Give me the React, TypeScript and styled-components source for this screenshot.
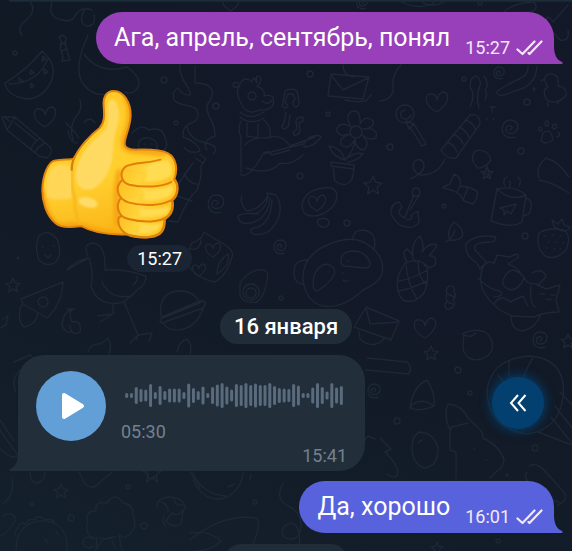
import React from "react";
import styled, { createGlobalStyle } from "styled-components";

const GlobalStyle = createGlobalStyle`
  *, *::before, *::after { box-sizing: border-box; }
  body { margin: 0; background: #121a26; }
`;

const Screen = styled.main`
  position: relative;
  isolation: isolate;
  display: flex;
  flex-direction: column;
  height: 100vh;
  overflow: hidden;
  padding: 0 18px;
  font-family: Roboto, "Noto Sans", sans-serif;
  color: #fff;
  background:
    radial-gradient(ellipse at 70% 25%, rgba(20, 24, 42, 0.9), rgba(20, 24, 42, 0) 60%),
    linear-gradient(200deg, #121927 0%, #111925 45%, #14202c 100%);

  & > * { flex-shrink: 0; }
`;

const Wallpaper = styled.svg`
  position: absolute;
  top: 0;
  left: 0;
  z-index: -1;
  fill: none;
  stroke: #1d2735;
  stroke-width: 1.4;
  stroke-linecap: round;
  stroke-linejoin: round;
`;

const TopEdge = styled.div`
  height: 2px;
  margin: 0 -18px 10px -9px;
  background: linear-gradient(#1d303d, #16232f);
`;

const OutBubble = styled.article<{ $color: string }>`
  position: relative;
  align-self: flex-end;
  display: flex;
  align-items: flex-end;
  gap: 15px;
  height: 52px;
  padding: 0 11px 0 18px;
  border-radius: 26px 26px 0 26px;
  background: ${(p) => p.$color};
`;

const Tail = styled.svg<{ $side: "left" | "right"; $color: string }>`
  position: absolute;
  bottom: 0;
  ${(p) => (p.$side === "right" ? "left: 100%;" : "right: 100%; transform: scaleX(-1);")}
  fill: ${(p) => p.$color};
`;

const MessageText = styled.p`
  margin: 0;
  font-size: 25px;
  line-height: 52px;
`;

const Meta = styled.span`
  display: flex;
  align-items: center;
  gap: 6px;
  padding-bottom: 4px;
  font-size: 18px;
  line-height: 24px;
  color: #f3e8fa;
`;

const StickerMessage = styled.article`
  display: flex;
  flex-direction: column;
  align-items: flex-end;
  align-self: flex-start;
  gap: 6px;
  margin: 26px 0 37px 23px;
`;

const Sticker = styled.svg`
  display: block;
  margin-right: 13px;
`;

const StickerTime = styled.time`
  padding: 0 10px;
  border-radius: 14px;
  background: #1b2432;
  font-size: 18px;
  line-height: 27px;
`;

const DateChip = styled.div`
  align-self: center;
  min-width: 124px;
  height: 35px;
  padding: 0 14px;
  border-radius: 18px;
  background: #202d39;
  font-size: 22px;
  font-weight: 500;
  line-height: 35px;
`;

const UpcomingDateChip = styled(DateChip)`
  margin-top: 11px;
`;

const VoiceRow = styled.div`
  display: flex;
  justify-content: space-between;
  align-items: flex-start;
  margin: 11px 0 10px;
`;

const VoiceBubble = styled.article`
  position: relative;
  display: grid;
  grid-template-columns: 70px auto;
  column-gap: 15px;
  padding: 16px 18px 3px;
  border-radius: 26px 26px 26px 0;
  background: #222e3a;
  color: #74818d;
  font-size: 18px;
  line-height: 24px;
`;

const PlayButton = styled.button`
  display: grid;
  place-items: center;
  width: 70px;
  height: 70px;
  padding: 0 0 0 3px;
  border: 0;
  border-radius: 50%;
  background: #619fd6;
  cursor: pointer;
`;

const Track = styled.div`
  display: flex;
  flex-direction: column;
  gap: 11px;
  padding-top: 11px;
`;

const Waveform = styled.svg`
  display: block;
  margin: 0 4px;
  stroke: #596b7c;
  stroke-width: 3;
  stroke-linecap: round;
`;

const SentTime = styled.time`
  grid-column: 1 / -1;
  justify-self: end;
`;

const BackButton = styled.button`
  display: grid;
  place-items: center;
  width: 52px;
  height: 52px;
  margin: 22px 10px 0 0;
  padding: 0;
  border: 0;
  border-radius: 50%;
  background: #03406f;
  box-shadow: 0 0 10px 3px rgba(3, 64, 111, 0.75);
  cursor: pointer;
`;

const BAR_HEIGHTS = [
  4, 4, 16, 12, 11, 22, 6, 18, 8, 13, 13, 13, 6, 23, 14, 8, 17, 4, 16, 21, 24, 17, 11,
  22, 20, 24, 20, 23, 20, 20, 24, 18, 14, 13, 12, 22, 19, 4, 4, 15, 24, 16, 7, 24, 15, 18,
];

const STARS = [[373, 185, 9], [487, 173, 6], [61, 491, 7], [431, 353, 7], [13, 285, 7], [152, 473, 9], [568, 341, 7], [437, 548, 6]];
const HEARTS = [[437, 102, 10], [45, 117, 10], [425, 328, 10], [317, 203, 8], [213, 250, 7], [231, 3, 8], [199, 270, 6]];
const SPIRALS = [[216, 204, 9], [280, 247, 7], [510, 129, 9], [499, 73, 6], [540, 340, 8], [374, 391, 7], [362, 3, 6]];
const DOTS = [
  [15, 53, 2], [164, 80, 3], [216, 106, 3], [176, 123, 2], [310, 74, 3], [328, 114, 2], [464, 79, 2], [527, 102, 3],
  [534, 89, 1], [390, 147, 3], [300, 176, 3], [521, 151, 3], [347, 223, 3], [444, 206, 2], [525, 236, 3], [18, 258, 1],
  [281, 298, 2], [128, 487, 2], [32, 504, 2], [71, 518, 3], [144, 526, 3], [255, 502, 2], [458, 370, 3], [470, 393, 2],
  [397, 421, 3], [535, 448, 3], [507, 475, 1], [480, 3, 2], [498, 541, 2],
];

const heartPath = (s: number) =>
  `M0 ${s} C${-s * 1.5} ${s * 0.2} ${-s * 1.2} ${-s} ${-s * 0.5} ${-s * 0.8} Q0 ${-s * 0.7} 0 ${-s * 0.2} Q${s * 0.2} ${-s} ${s * 0.7} ${-s} C${s * 1.4} ${-s * 0.8} ${s * 1.1} ${s * 0.3} 0 ${s}Z`;
const starPath = (s: number) =>
  `M0 ${-s} L${s * 0.3} ${-s * 0.3} L${s} ${-s * 0.2} L${s * 0.45} ${s * 0.25} L${s * 0.6} ${s} L0 ${s * 0.55} L${-s * 0.6} ${s} L${-s * 0.45} ${s * 0.25} L${-s} ${-s * 0.2} L${-s * 0.3} ${-s * 0.3}Z`;
const spiralPath = (s: number) =>
  `M${s * 0.6} ${s * 0.9} C${-s * 1.3} ${s * 1.4} ${-s * 1.2} ${-s} 0 ${-s} C${s * 1.3} ${-s} ${s} ${s * 0.6} 0 ${s * 0.5} C${-s * 0.7} ${s * 0.4} ${-s * 0.5} ${-s * 0.4} 0 ${-s * 0.4} Q${s * 0.5} ${-s * 0.2} 0 ${s * 0.1}`;

const DOODLES = [
  // watermelon slice and squiggles
  "M5 83 Q28 69 42 51 Q57 64 52 79 Q45 98 27 99 Q7 96 5 83Z M9 84 Q37 84 48 59 M43 56 l3 3 l-4 2z M31 70 l3 3 l-4 1z M44 69 l4 3 l-4 2z M19 78 l4 3 l-3 2z M31 83 l3 3 l-3 2z",
  "M30 2 C36 9 32 15 25 21 C20 25 18 30 22 35 M59 37 q4-4 7 1 l-1 5 l2 8 l3 9 l-8 1 l1-5 l-3-8 l2-5z M60 44 l6-1 M61 51 l6-2",
  "M52 2 Q47 17 62 20 Q73 23 76 14 Q82 6 92 10 M85 9 Q77 23 87 26 Q96 26 94 15 M88 35 Q72 70 84 85 Q94 97 108 94 M84 54 Q99 75 127 67 Q145 80 136 90 Q131 95 125 92",
  // pencil and bird
  "M2 117 L15 117 L50 147 Q54 152 47 158 L39 156 L7 130Z M15 117 L7 130 M5 117 L9 121 M45 143 Q37 147 35 153 M40 138 Q33 143 31 149 M15 123 L36 140",
  "M80 100 q3 10-5 18 q-6 10-2 22 M66 123 q8 7 13 15 M68 131 q2 12 9 12 M84 122 q7-6 11 1",
  // daisy face
  "M132 133 q9-10 17-3 q14-4 16 8 q5 10-5 15 M139 150 q-3-13 9-12 q12 2 8 13 M144 144 h1 M151 144 h1 M145 149 q3 3 6 0",
  // bottle streamers
  "M180 65 C179 82 192 87 190 95 Q183 96 178 88 Q171 92 174 100 C181 108 199 103 198 115 C197 127 182 119 183 137 Q198 142 200 151 Q190 155 184 147 M195 66 V83 Q217 83 211 99 C199 112 217 120 215 136 Q201 141 207 150 M187 127 Q190 140 206 143 Q221 147 213 154 M200 154 L206 159 L201 166 Q202 178 197 190 Q187 199 178 222 L168 221 M193 163 L185 174 Q173 190 173 207 M184 174 Q191 185 198 184 M174 195 l18 6 M195 158 l8 5",
  // llama with a guitar
  "M242 105 Q234 91 240 85 Q235 89 233 86 Q233 80 240 84 Q245 75 252 82 Q253 74 257 83 Q255 73 260 77 Q263 81 257 86 Q266 90 264 96 Q276 93 273 105 Q269 111 259 110 Q248 116 242 105Z M252 92 a4 4 0 1 0 .1 0 M262 101 q6 5 10-1 M240 112 Q251 121 264 112 M240 117 Q251 126 264 118 M241 121 Q237 129 241 137 V172 M264 120 Q272 127 270 138 M247 123 v13 l11 2 v-14 M245 145 Q252 137 266 138 Q282 133 290 146 L315 137 M240 174 Q248 181 263 154 Q268 149 272 155 L290 150 M246 168 Q269 176 280 163 Q291 166 303 155 M304 143 L310 137 Q319 134 321 137 Q317 143 310 146 L304 147Z M263 154 L303 144",
  // notes
  "M285 102 q4 4 1 6 q-5 0-3-6 l2-11 q6-4 12 0 l2 10 q0 6-4 6 q-4-4 0-8 l-2-5 h-5z M286 113 l-2 10 q-4 4 0 6 q5-1 5-7 l1-7 M303 117 q-6 0-7 4 l1 8 q-5 3-3 6 q5 0 6-4 l-1-8 l4-2z",
  // envelope
  "M331 74 L369 77 L363 99 L328 96Z M331 75 L343 90 L368 78 M343 65 q0 10 10 12 M371 95 q-4 10-26 5 M401 65 q-9 9-8 20 q2 14-13 16",
  // flower pot
  "M356 126 a6 6 0 1 0 .1 0 M351 127 Q344 114 353 111 Q361 110 360 124 Q366 114 373 121 Q375 128 363 129 Q379 127 376 138 Q370 141 362 135 Q371 143 364 150 Q355 149 355 139 Q349 151 341 145 Q339 137 350 134 Q336 138 337 128 Q342 121 351 127Z M355 140 Q354 151 345 160 M331 162 L354 165 V169 L331 166Z M333 167 L335 181 Q346 189 352 179 L354 169 M345 160 Q333 157 329 146 Q342 148 345 160 Q355 151 363 154 Q357 161 348 162",
  // lollipop
  "M405 105 a9 9 0 1 0 .1 0 M405 110 q-6 1-4 7 q7 5 10-2 M406 121 l8 3 l-5 5z M410 127 L422 146 L426 144 L414 124",
  // firecracker
  "M470 115 Q480 113 480 124 L456 158 Q447 160 441 150Z M465 120 q8 2 11 10 M459 127 q7 3 10 10 M453 134 q8 3 10 10 M447 142 q8 3 10 10 M445 159 Q438 175 421 175 Q411 172 414 162 Q420 156 424 164 Q425 173 410 179 M470 107 q6-12 0-20 q0-10 6-11 q7 5 3 12 q-3 9 0 20 M484 76 q6 9 1 14 q3 5 0 10",
  "M537 66 Q536 87 514 91 Q499 99 496 92 Q508 84 519 79 Q529 75 528 66 M490 107 h5 M492 108 v4 M486 119 h1 M493 119 h1",
  // duckling, paw
  "M548 87 Q541 77 549 74 Q560 73 558 86 Q567 87 566 95 Q558 106 547 100 Q541 90 548 87Z M548 102 v4 M558 101 v3 M541 81 l4-2",
  "M543 133 Q551 127 553 140 Q544 146 541 140Z M539 128 q3-2 3 2 q-4 3-3-2 M546 121 q4 0 2 5 q-5 0-2-5 M554 124 q5 1 1 5 q-5-1-1-5 M558 132 q4 3-1 5 M475 151 Q488 148 491 160 Q484 169 478 168 Q469 160 475 151Z M487 166 l2 10 l-5-4 M539 178 Q535 167 546 158 Q558 161 569 177 M539 180 Q552 182 569 193",
  // bananas
  "M242 196 Q239 203 247 211 Q259 210 268 196 L267 193 L276 195 Q284 208 277 221 Q269 237 253 234 Q246 229 258 227 Q271 222 272 200 M270 198 Q269 216 254 222 Q240 227 238 216 Q244 212 258 214 M268 197 Q266 210 255 214",
  // egg, speech ball
  "M318 189 Q335 184 337 195 Q337 208 320 215 Q303 219 302 206 Q303 193 318 189Z M319 219 q11-2 10 5 q-3 5-9 2 q-5-4-1-7",
  // anchor
  "M416 188 a4 4 0 1 0 .1 0 M414 195 Q409 206 405 218 Q395 214 402 207 L399 202 Q390 204 391 214 Q398 226 403 226 Q414 230 419 222 L418 211 L411 215 Q414 219 407 220 M418 197 L410 210 M412 196 h8",
  // bow
  "M443 187 L450 184 L454 174 Q462 177 460 186 L468 187 L477 191 Q479 197 473 204 L464 201 L460 195 L454 191 L443 188Z M460 186 L457 192 M468 187 L463 200",
  // mug
  "M497 189 Q514 185 526 195 L522 222 Q512 229 491 221Z M498 190 Q512 202 526 195 M526 198 Q535 201 529 214 L523 216 M500 208 L516 204 L511 214 L507 211 L504 215 V210Z M505 186 q-3-7 2-9 M519 186 q3-6-1-9 M510 187 v-6",
  // strawberry
  "M539 233 Q548 227 564 230 Q572 236 566 250 Q556 261 545 256 Q535 247 539 233Z M554 227 l-2-7 l6 4 l4-5 l2 6 l6 2 q-2 6-10 3z M545 236 h1 M552 235 h1 M560 236 h1 M548 242 h1 M556 242 h1 M563 243 h1 M546 248 h1 M554 249 h1 M560 249 h1",
  // panda
  "M303 280 Q302 257 325 246 Q354 232 371 247 Q385 257 382 274 Q379 283 363 290 Q343 309 323 306 Q306 302 303 280Z M353 240 Q352 230 364 230 Q378 233 374 249 M307 260 Q293 260 294 274 Q295 284 303 284 M313 284 Q313 269 325 264 Q335 265 335 273 Q330 284 317 291 Q313 290 313 284Z M341 262 Q340 252 352 251 Q367 251 370 264 Q370 268 365 268 L344 266 Q341 265 341 262Z M328 272 h1 M347 261 h1 M342 273 h1 M343 280 q3 3 5 0",
  // pineapple
  "M405 263 Q419 257 427 266 Q429 282 424 293 Q414 305 403 300 Q394 290 399 274Z M407 262 Q401 252 407 249 Q411 251 413 257 Q411 242 420 236 Q425 245 422 252 Q429 242 437 245 Q434 251 429 256 Q438 255 435 265 Q429 270 424 265 M413 258 q3 4 3 4 M399 281 Q411 279 428 270 M398 291 Q411 289 427 281 M406 265 Q408 285 417 299 M418 262 Q418 278 427 285",
  // leaf, candy
  "M454 222 Q465 229 462 237 Q457 241 450 240 Q446 231 454 222Z M455 230 Q452 239 446 242 M449 286 q7-1 5 6 q3 4-1 8 q4 3-1 8 q-6 3-7-2 q0-3 2-5 q-2-5 0-7 q-2-5 2-8z M448 294 l6 3 M447 302 l6 2",
  // cat on a cushion
  "M496 237 Q495 243 490 242 Q472 242 475 250 L486 262 Q477 275 483 291 Q495 311 513 316 L534 317 Q544 312 559 312 L556 300 L560 285 L546 289 L536 284 Q527 285 524 277 Q511 263 504 278 Q500 287 511 290 Q520 289 524 278 M496 237 Q475 233 466 244 Q464 255 477 263 L480 269 Q489 258 494 264 L497 255 L510 257 Q520 251 518 258 L508 264 Q518 267 524 278 M478 278 Q490 290 500 291 Q505 296 494 297 M494 304 Q501 293 510 302 L523 296 L528 306 M531 287 Q529 301 535 307 M532 273 Q543 267 546 277 L538 285 M511 316 Q511 330 523 331 Q536 328 541 314 M540 294 h5 M551 295 h4 M546 299 q3 2 5 0",
  // owl, toucan
  "M39 236 Q48 228 57 239 Q63 253 56 262 Q47 268 39 260 Q34 246 39 236Z M42 247 h1 M53 246 h1 M45 255 l3 3 l3-3",
  "M88 256 Q82 243 94 243 Q106 245 105 270 Q118 269 132 272 L146 276 Q146 285 137 290 Q127 301 120 303 Q97 306 91 286 Q94 275 89 258 L67 270 Q74 262 88 258 M102 282 Q110 300 132 296 M136 276 Q140 279 133 285 M113 304 V314 L98 316 M113 314 L100 322 M124 302 L138 335 M138 335 l-8 8 M138 335 l-2 5 M138 335 l14-2 l-3 8",
  // cat cushion
  "M204 232 Q216 240 224 244 Q235 252 232 257 Q226 277 214 282 Q195 277 189 266 Q186 254 192 243 Q203 239 204 232Z M217 274 Q217 261 228 254 Q231 265 217 274Z M191 249 Q200 251 201 240",
  // cheese, cherries
  "M21 299 L63 282 Q62 304 47 318 L23 304Z M43 297 a5 5 0 1 0 .1 0 M22 304 Q16 320 24 327 Q36 325 38 313 M70 310 Q63 313 62 325 Q66 335 72 331 M75 309 Q67 310 72 322 Q82 319 80 332 Q71 337 70 325 M67 309 h8",
  // burger
  "M161 315 Q158 294 177 291 Q194 290 200 303 L162 318Z M162 317 L200 301 Q209 301 203 308 L162 323 Q158 321 162 317Z M163 323 Q168 331 179 330 Q196 328 203 309",
  // avocado
  "M240 283 Q246 273 258 270 Q270 268 267 280 Q265 296 257 302 Q243 304 240 295Z M251 284 a8 8 0 1 0 .1 0 M251 288 a5 5 0 1 0 .1 0",
  // envelope by the date
  "M366 307 L399 321 L391 340 L354 327Z M366 308 L370 324 L399 322 M359 331 L360 339 Q373 350 384 339",
  // fruit, balloon, sea
  "M464 333 Q474 328 485 332 Q494 338 492 350 Q487 360 474 360 Q463 357 463 346Z M462 334 q8 5 14-1 M531 356 Q567 360 563 397 Q559 430 527 434 Q488 428 487 391 Q491 358 531 356Z M509 361 v40 M533 358 Q524 370 519 395 M560 392 L572 405 M551 417 L572 443 M538 432 L572 445 M555 406 L572 428",
  // marker, bell, egg
  "M367 358 L407 362 Q413 367 409 374 L366 370 M410 409 Q412 387 427 380 Q436 394 434 406 Q417 413 410 407 Q420 396 434 406 M420 432 Q434 433 438 448 Q438 467 424 468 Q411 463 412 445 Q413 434 420 432Z M418 443 l4-3",
  // cane, tree
  "M365 440 l3-4 l7 3 M380 438 L391 449 L385 452 Q398 464 398 474 Q394 480 387 474 M449 404 Q463 406 468 418 L475 425 Q483 430 483 438 Q500 446 504 460 Q503 468 497 471 L490 478 M448 404 Q443 415 450 430 L452 427 L468 423 M450 430 V450 L456 452 V481 M474 449 h1 M486 460 h1",
  // bone and bottle
  "M529 466 Q536 462 544 470 L563 491 Q568 497 563 502 L557 506 M527 472 Q523 480 531 483 M540 494 L560 503 M498 375 L503 381",
  // dinosaur and tree bottom-left
  "M16 551 Q16 524 40 521 Q62 519 67 541 V551 M17 536 q-5-1 0-7 q2-8 9-5 q2-6 9-4 q2-7 10 0 q8-3 10 4 M45 539 l3 4 M56 531 l2 4 M2 516 Q16 510 15 521 Q9 532 0 536 M12 479 Q15 495 3 504",
  "M95 539 Q83 533 88 523 Q84 511 96 511 Q94 501 107 503 Q115 491 123 503 Q134 504 133 516 Q140 529 124 538 L119 535 L122 551 M95 539 Q84 534 83 543 Q87 551 93 546 M97 537 L96 549 Q103 536 116 537 M112 541 l3 7 M100 538 q8 2 14-1",
  "M157 507 Q157 497 171 497 Q185 499 185 508 Q178 518 172 513 L166 521 Q173 529 181 524 L183 512 M164 516 Q161 522 166 526 M161 502 q8 3 7 10 M174 498 q0 8 9 7 M30 472 q0 11 7 11 q8-1 8-11 M79 472 L86 485 Q94 490 99 483 L112 472 M147 471 l2 8 l8-3 M190 472 l10 16",
  // planet, comet
  "M193 480 Q202 500 221 499 Q240 494 243 473 M192 472 Q203 495 226 496 M228 487 l6-3 M251 474 L250 480 M190 540 Q222 513 257 518 Q262 528 249 551 M190 533 Q210 530 221 541 Q211 551 194 551 M283 484 Q273 500 292 508 Q304 517 300 532 Q295 543 284 537 Q278 527 291 523 Q302 525 299 551",
  "M503 13 Q512 3 534 2 Q540 10 529 12 L503 13Q501 20 512 24 M568 5 L553 22 Q544 10 548 27 L560 40 Q570 42 568 30 M423 3 Q437 8 446 0 M397 0 Q420 12 435 2 M14 362 L30 355 L36 360 M20 370 Q10 380 16 392 M88 352 Q90 343 101 344 L108 338 Q113 347 108 355 M177 352 Q179 341 187 339 Q193 346 190 354",
  "M0 430 Q12 448 18 455 M0 448 Q10 460 18 456 M0 420 L14 441 M3 319 L8 316 L6 325 L0 328",
];

const ChatWallpaper = () => (
  <Wallpaper width="572" height="551" viewBox="0 0 572 551" aria-hidden="true">
    {DOODLES.map((d, i) => <path key={i} d={d} />)}
    {HEARTS.map(([x, y, s], i) => <path key={i} d={heartPath(s)} transform={`translate(${x} ${y})`} />)}
    {STARS.map(([x, y, s], i) => <path key={i} d={starPath(s)} transform={`translate(${x} ${y})`} />)}
    {SPIRALS.map(([x, y, s], i) => <path key={i} d={spiralPath(s)} transform={`translate(${x} ${y})`} />)}
    {DOTS.map(([x, y, r], i) => <circle key={i} cx={x} cy={y} r={r} />)}
  </Wallpaper>
);

const BubbleTail = ({ side, color }: { side: "left" | "right"; color: string }) => (
  <Tail $side={side} $color={color} width="9" height="26" viewBox="0 0 9 26" aria-hidden="true">
    <path d="M-1 0 H0 V8 C0 17 3 22 8 24 Q10 26 7 26 H-1Z" />
  </Tail>
);

const ReadMark = () => (
  <svg width="27" height="16" viewBox="0 0 27 16" fill="none" stroke="currentColor" strokeWidth="2.2" strokeLinecap="round" strokeLinejoin="round" role="img" aria-label="Прочитано">
    <path d="M1.5 9.5 L6.5 14 L18.5 1.5 M12.5 13 L13.5 14 L25.5 1.5" />
  </svg>
);

const ThumbsUp = () => (
  <Sticker width="138" height="149" viewBox="60 31 414 447" role="img" aria-label="👍">
    <defs>
      <linearGradient id="skin" x1="0" y1="0" x2="0.25" y2="1">
        <stop offset="0" stopColor="#ffc928" />
        <stop offset="0.65" stopColor="#ffd02f" />
        <stop offset="1" stopColor="#fbb619" />
      </linearGradient>
      <linearGradient id="finger" x1="0" y1="0" x2="1" y2="0.3">
        <stop offset="0" stopColor="#fdbd1f" />
        <stop offset="0.5" stopColor="#ffd33a" />
        <stop offset="1" stopColor="#ffc422" />
      </linearGradient>
      <filter id="soft"><feGaussianBlur stdDeviation="7" /></filter>
      <filter id="softer"><feGaussianBlur stdDeviation="3" /></filter>
      <clipPath id="hand">
        <path d="M248 78 C245 48 260 34 278 34 C308 35 329 68 329 107 C328 146 310 172 311 194 C313 207 325 210 345 210 C382 209 422 210 441 221 C466 235 471 268 460 298 C474 314 474 346 454 362 C460 387 453 405 431 419 C433 445 424 468 390 472 C360 476 333 471 317 464 C262 466 212 457 180 439 C150 444 120 446 104 431 C76 409 63 364 64 328 C66 284 81 250 100 243 C125 238 145 241 159 237 C175 200 211 164 236 145 C252 127 250 106 248 78Z" />
      </clipPath>
    </defs>
    <g clipPath="url(#hand)">
      <path fill="url(#skin)" d="M60 30 H475 V480 H60Z" />
      <g fill="none" stroke="#f59c10" strokeWidth="14" filter="url(#soft)">
        <path d="M311 46 C337 85 328 128 309 176 Q300 214 351 214 L438 222 M64 330 Q72 420 118 440 Q170 434 185 440 Q250 465 330 466 L395 473 M296 270 Q282 330 290 440" />
      </g>
      <path fill="#ffda63" d="M270 60 C290 58 297 95 293 125 C285 150 278 175 277 205 C277 260 245 326 202 330 C160 330 157 280 176 243 C195 195 228 177 254 148 C270 123 251 68 270 60Z" filter="url(#softer)" />
      <path fill="#ffd657" d="M94 262 Q122 247 151 261 Q160 273 157 302 L154 355 Q116 365 77 354 Q72 292 94 262Z" filter="url(#softer)" />
      <ellipse cx="201" cy="368" rx="30" ry="15" fill="#ffdc69" transform="rotate(15 201 368)" filter="url(#softer)" />
      <path d="M154 265 Q150 325 161 358 Q160 410 181 437" fill="none" stroke="#f9b51a" strokeWidth="8" filter="url(#softer)" />
    </g>
    <g fill="url(#finger)" stroke="#df7e0b" strokeWidth="6" strokeLinecap="round" strokeLinejoin="round">
      <path d="M293 414 C287 441 309 466 336 468 C365 476 405 474 420 457 Q430 443 431 419 L310 405Z" />
      <path d="M296 360 C284 382 292 412 323 418 C367 430 420 428 440 410 Q459 390 453 364 L310 345Z" />
      <path d="M303 302 C280 322 289 358 322 368 C368 381 423 378 452 361 C474 345 472 312 459 299Z" />
      <path stroke="none" d="M419 240 C379 252 331 248 312 262 C293 281 302 309 325 315 C370 325 426 322 451 307 C471 288 472 245 442 225Z" />
      <path fill="none" d="M419 240 C379 252 331 248 312 262 C293 281 302 309 325 315 C370 325 426 322 451 307" />
    </g>
    <g fill="#ffdc51" filter="url(#softer)">
      <path d="M372 264 Q386 251 437 241 Q458 251 451 289 Q420 309 369 305 Q384 282 372 264Z" />
      <path d="M365 329 Q407 336 453 316 Q463 340 443 351 Q407 367 366 360 Q375 345 365 329Z" />
      <path d="M353 386 Q400 393 444 380 Q447 398 431 405 Q391 416 352 410 Q363 399 353 386Z" />
      <path d="M353 431 Q388 438 421 431 Q415 456 391 459 Q371 463 349 458 Q361 445 353 431Z" />
    </g>
    <path d="M152 270 Q153 246 161 232" fill="none" stroke="#d4810d" strokeWidth="7" strokeLinecap="round" />
    <path fill="none" stroke="#e2850f" strokeWidth="6" strokeLinejoin="round" d="M248 78 C245 48 260 34 278 34 C308 35 329 68 329 107 C328 146 310 172 311 194 C313 207 325 210 345 210 C382 209 422 210 441 221 C466 235 471 268 460 298 C474 314 474 346 454 362 C460 387 453 405 431 419 C433 445 424 468 390 472 C360 476 333 471 317 464 C262 466 212 457 180 439 C150 444 120 446 104 431 C76 409 63 364 64 328 C66 284 81 250 100 243 C125 238 145 241 159 237 C175 200 211 164 236 145 C252 127 250 106 248 78Z" />
  </Sticker>
);

const OutgoingMessage = ({ text, time, color }: { text: string; time: string; color: string }) => (
  <OutBubble $color={color}>
    <MessageText>{text}</MessageText>
    <Meta>
      <time>{time}</time>
      <ReadMark />
    </Meta>
    <BubbleTail side="right" color={color} />
  </OutBubble>
);

const VoiceMessage = () => (
  <VoiceBubble>
    <PlayButton type="button" aria-label="Воспроизвести">
      <svg width="24" height="28" viewBox="0 0 24 28" aria-hidden="true">
        <path d="M3 3 V25 L21 14Z" fill="#fff" stroke="#fff" strokeWidth="4" strokeLinejoin="round" />
      </svg>
    </PlayButton>
    <Track>
      <Waveform width="218" height="27" viewBox="0 0 218 27" aria-hidden="true">
        {BAR_HEIGHTS.map((h, i) => {
          const x = 1.7 + i * 4.77;
          const half = (h - 2) / 2;
          return <line key={i} x1={x} x2={x} y1={13.5 - half} y2={13.5 + half} />;
        })}
      </Waveform>
      <span>05:30</span>
    </Track>
    <SentTime>15:41</SentTime>
    <BubbleTail side="left" color="#222e3a" />
  </VoiceBubble>
);

export default function App() {
  return (
    <>
      <GlobalStyle />
      <Screen>
        <ChatWallpaper />
        <TopEdge />
        <OutgoingMessage text="Ага, апрель, сентябрь, понял" time="15:27" color="#9740ba" />
        <StickerMessage>
          <ThumbsUp />
          <StickerTime>15:27</StickerTime>
        </StickerMessage>
        <DateChip>16 января</DateChip>
        <VoiceRow>
          <VoiceMessage />
          <BackButton type="button" aria-label="Назад">
            <svg width="18" height="20" viewBox="0 0 18 20" fill="none" stroke="#fff" strokeWidth="2" aria-hidden="true">
              <path d="M9 2 L2 10 L9 18 M16.5 2 L9.5 10 L16.5 18" />
            </svg>
          </BackButton>
        </VoiceRow>
        <OutgoingMessage text="Да, хорошо" time="16:01" color="#5862dc" />
        <UpcomingDateChip aria-hidden="true" />
      </Screen>
    </>
  );
}
